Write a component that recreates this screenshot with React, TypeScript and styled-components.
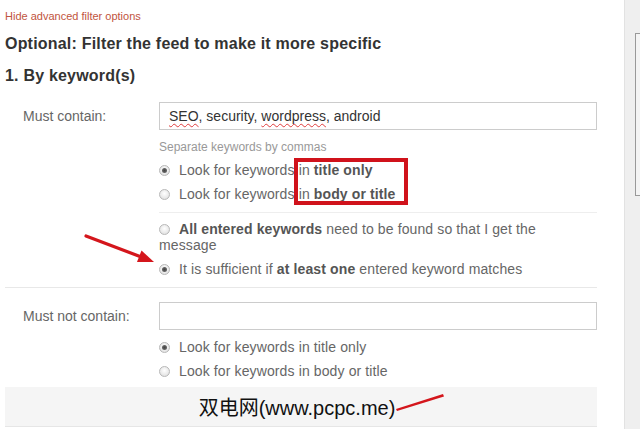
import React from 'react';
import styled, { createGlobalStyle } from 'styled-components';

const GlobalStyle = createGlobalStyle`
  html, body {
    margin: 0;
    padding: 0;
    background: #ffffff;
    overflow: hidden;
  }
  body {
    font-family: "Liberation Sans", Arial, sans-serif;
  }
`;

const Page = styled.div`
  position: relative;
  display: flex;
  width: 640px;
  height: 429px;
  overflow: hidden;
`;

const Main = styled.div`
  width: 624px;
  box-sizing: border-box;
  padding: 0 27px 0 5px;
`;

const ToggleLink = styled.a`
  display: block;
  padding-top: 10px;
  font-size: 11px;
  line-height: 13px;
  color: #bf5440;
  text-decoration: none;
`;

const Heading = styled.h2`
  margin: 11px 0 0;
  font-size: 16px;
  line-height: 20px;
  letter-spacing: 0.2px;
  font-weight: bold;
  color: #333333;
`;

const SubHeading = styled.h3`
  margin: 12px 0 0;
  font-size: 16px;
  line-height: 20px;
  letter-spacing: 0.2px;
  font-weight: bold;
  color: #333333;
`;

const FilterRow = styled.div<{ $top: number; $divided?: boolean }>`
  display: grid;
  grid-template-columns: 154px 438px;
  padding: ${p => p.$top}px 0 ${p => (p.$divided ? 6 : 0)}px;
  border-bottom: ${p => (p.$divided ? '1px solid #e8e8e8' : 'none')};
`;

const Label = styled.div`
  padding-left: 18px;
  font-size: 14px;
  line-height: 28px;
  color: #666666;
`;

const Field = styled.div``;

const TextBox = styled.div`
  height: 28px;
  box-sizing: border-box;
  border: 1px solid #cccccc;
  padding: 0 9px;
  font-size: 14px;
  line-height: 26px;
  color: #333333;
  background: #ffffff;
  white-space: nowrap;
`;

const Misspelled = styled.span`
  text-decoration: underline wavy #e03c3c;
  text-decoration-thickness: 1px;
  text-underline-offset: 2px;
  text-decoration-skip-ink: none;
`;

const Hint = styled.div`
  margin-top: 9px;
  font-size: 12px;
  line-height: 16px;
  color: #999999;
`;

const OptionGroup = styled.div<{ $gap: number }>`
  margin-top: ${p => p.$gap}px;
`;

const Option = styled.div`
  padding: 4px 0;
  font-size: 14px;
  line-height: 16px;
  letter-spacing: 0.12px;
  color: #666666;

  b {
    color: #555555;
  }
`;

const Radio = styled.span<{ $checked?: boolean }>`
  position: relative;
  display: inline-block;
  width: 11px;
  height: 11px;
  box-sizing: border-box;
  margin-right: 9px;
  vertical-align: -1px;
  border-radius: 50%;
  border: 1px solid #b8b8b8;
  background: radial-gradient(circle at 50% 40%, #ffffff 0%, #e9e9e9 60%, #d6d6d6 100%);

  &::after {
    content: '';
    display: ${p => (p.$checked ? 'block' : 'none')};
    position: absolute;
    left: 2px;
    top: 2px;
    width: 5px;
    height: 5px;
    border-radius: 50%;
    background: radial-gradient(circle, #444 0%, #777 100%);
  }
`;

const Divider = styled.div`
  height: 1px;
  margin: 6px 0 4px;
  background: #eeeeee;
`;

const WatermarkBand = styled.div`
  margin-top: 4px;
  height: 40px;
  box-sizing: border-box;
  border-bottom: 1px solid #e6e6e6;
  background: #f5f5f5;
  display: flex;
  align-items: center;
  justify-content: center;
  padding-right: 8px;
  font-family: "Liberation Sans", "Noto Sans CJK SC", sans-serif;
  font-size: 20px;
  color: #111111;
`;

const SideStrip = styled.div`
  width: 16px;
  height: 429px;
  box-sizing: border-box;
  padding: 33px 0 0 10px;
  border-left: 1px solid #e2e2e2;
  background: #efefef;
`;

const SideFrame = styled.div`
  height: 161px;
  border: 1px solid #999999;
  border-right: none;
  background: #f4f4f4;
`;

const HighlightBox = styled.div`
  position: absolute;
  left: 294px;
  top: 158px;
  width: 114px;
  height: 47px;
  box-sizing: border-box;
  border: 4px solid #d0121b;
  pointer-events: none;
`;

const Overlay = styled.svg`
  position: absolute;
  left: 0;
  top: 0;
  pointer-events: none;
`;

const ScopeOptions: React.FC<{ bold?: boolean; gap: number }> = ({ bold, gap }) => (
  <OptionGroup $gap={gap}>
    <Option>
      <Radio $checked />
      Look for keywords in {bold ? <b>title only</b> : 'title only'}
    </Option>
    <Option>
      <Radio />
      Look for keywords in {bold ? <b>body or title</b> : 'body or title'}
    </Option>
  </OptionGroup>
);

export default function App() {
  return (
    <>
      <GlobalStyle />
      <Page>
        <Main>
          <ToggleLink href="#">Hide advanced filter options</ToggleLink>
          <Heading>Optional: Filter the feed to make it more specific</Heading>
          <SubHeading>1. By keyword(s)</SubHeading>

          <FilterRow $top={16} $divided>
            <Label>Must contain:</Label>
            <Field>
              <TextBox>
                <Misspelled>SEO</Misspelled>, security, <Misspelled>wordpress</Misspelled>, android
              </TextBox>
              <Hint>Separate keywords by commas</Hint>
              <ScopeOptions bold gap={3} />
              <Divider />
              <Option>
                <Radio />
                <b>All entered keywords</b> need to be found so that I get the message
              </Option>
              <Option>
                <Radio $checked />
                It is sufficient if <b>at least one</b> entered keyword matches
              </Option>
            </Field>
          </FilterRow>

          <FilterRow $top={14}>
            <Label>Must not contain:</Label>
            <Field>
              <TextBox />
              <ScopeOptions gap={5} />
            </Field>
          </FilterRow>

          <WatermarkBand>双电网(www.pcpc.me)</WatermarkBand>
        </Main>
        <SideStrip>
          <SideFrame />
        </SideStrip>

        <HighlightBox />
        <Overlay width="640" height="429" viewBox="0 0 640 429">
          <line x1="86" y1="236" x2="140" y2="256.5" stroke="#d4161c" strokeWidth="3.2" strokeLinecap="round" />
          <polygon points="154,262 137,262 141.5,250.5" fill="#d4161c" />
          <path d="M396 409 L443 394 L444 396.5 L397 411 Z" fill="#d4161c" />
        </Overlay>
      </Page>
    </>
  );
}
